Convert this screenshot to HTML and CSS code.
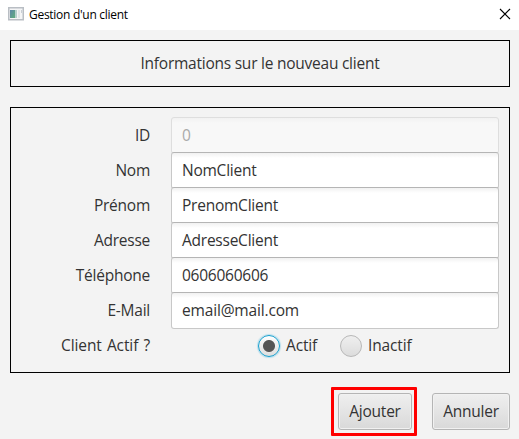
FILE: index.html
```html
<!DOCTYPE html>
<html lang="fr">
<head>
<meta charset="utf-8">
<title>Gestion d'un client</title>
<link rel="stylesheet" href="styles.css">
</head>
<body>
<header class="titlebar">
  <svg class="app-icon" width="16" height="14" viewBox="0 0 16 14">
    <defs><linearGradient id="pane" x1="0" y1="0" x2="1" y2="1"><stop offset="0" stop-color="#5b86a8"/><stop offset="1" stop-color="#5fae7c"/></linearGradient></defs>
    <rect x=".75" y=".75" width="14.500" height="12" fill="#f4f5f6" stroke="#b9bec4" stroke-width="1.500"/>
    <rect x="2" y="3" width="5" height="8" fill="url(#pane)"/>
    <rect x="7" y="3" width="2" height="8" fill="#b5d0cc"/>
    <rect x="10" y="3" width="2" height="8" fill="#e1e5e8"/>
    <path d="M13.500 3v3" stroke="#c9ced4"/>
  </svg>
  <h1 class="title">Gestion d'un client</h1>
  <svg class="close" width="12" height="12" viewBox="0 0 12 12"><path d="M1 1l10 10M11 1L1 11" stroke="#000" stroke-width="1.100"/></svg>
</header>
<main class="content">
  <section class="banner">Informations sur le nouveau client</section>
  <form class="form">
    <span class="label">ID</span><div class="field disabled">0</div>
    <span class="label">Nom</span><div class="field">NomClient</div>
    <span class="label">Prénom</span><div class="field">PrenomClient</div>
    <span class="label">Adresse</span><div class="field">AdresseClient</div>
    <span class="label">Téléphone</span><div class="field">0606060606</div>
    <span class="label">E-Mail</span><div class="field email">email@mail.com</div>
    <span class="label question">Client Actif ?</span>
    <div class="radios">
      <span class="radio checked"></span><span class="option first">Actif</span>
      <span class="radio"></span><span class="option">Inactif</span>
    </div>
  </form>
  <footer class="actions">
    <div class="highlight"><button class="button add" type="button">Ajouter</button></div>
    <button class="button cancel" type="button">Annuler</button>
  </footer>
</main>
</body>
</html>
```
FILE: styles.css
```css
* { box-sizing: border-box; }
body {
  margin: 0;
  width: 519px;
  height: 439px;
  overflow: hidden;
  background: #f3f3f3;
  color: #333;
  font: 15.5px/20px "Open Sans", "Noto Sans", sans-serif;
  letter-spacing: -.24px;
}
.titlebar {
  display: flex;
  align-items: center;
  height: 30px;
  padding: 0 8px;
  background: #fff;
}
.app-icon { margin-top: -2px; }
.title {
  flex: 1;
  margin: 0 0 0 5px;
  color: #000;
  font-size: 12px;
  font-weight: 400;
  letter-spacing: -.28px;
}
.close { margin: -2px 0 0; }
.content { padding: 10px 9px 0 10px; }
.banner {
  display: flex;
  align-items: center;
  justify-content: center;
  height: 47px;
  padding-bottom: 2px;
  border: 1px solid #000;
}
.form {
  display: grid;
  grid-template-columns: 140px 328px;
  grid-auto-rows: 35px;
  column-gap: 20px;
  height: 266px;
  margin-top: 20px;
  padding-top: 9px;
  border: 1px solid #000;
}
.label { padding-right: 1px; text-align: right; line-height: 37px; }
.question { word-spacing: 1.2px; letter-spacing: -.1px; }
.field {
  height: 37px;
  padding-left: 10px;
  line-height: 35px;
  border: 1px solid #c8c8c8;
  border-top-color: #b5b5b5;
  border-radius: 3px;
  background: linear-gradient(#f1f1f1, #fff 5px);
}
.email { letter-spacing: -.17px; }
.disabled {
  color: #aaa;
  border-color: #dedede;
  background: linear-gradient(#f2f2f2, #f8f8f8 5px);
}
.radios { display: flex; align-items: center; height: 37px; padding-left: 87px; }
.radio {
  width: 22px;
  height: 22px;
  border: 1px solid #b8b8b8;
  border-radius: 50%;
  background: linear-gradient(#efefef, #dcdcdc);
}
.checked {
  border: 1.500px solid #159fce;
  background: radial-gradient(circle, #555 5.500px, transparent 6.500px), linear-gradient(#fff, #ddd);
  box-shadow: 0 0 1px 1px #b9deec;
}
.option { margin-left: 6px; line-height: 37px; letter-spacing: -.15px; }
.first { width: 54px; }
.actions {
  display: flex;
  align-items: flex-start;
  justify-content: flex-end;
  gap: 15px;
  margin-top: 14px;
}
.highlight {
  width: 86px;
  height: 49px;
  padding: 3px 4px;
  border: 3px solid #f00;
  border-radius: 1px;
}
.button {
  display: block;
  height: 37px;
  padding: 0 0 2px;
  border: 1px solid #b5b5b5;
  border-radius: 3px;
  background: linear-gradient(#efefef, #d9d9d9);
  box-shadow: inset 0 0 0 1px #f1f1f1;
  color: #333;
  font: inherit;
  letter-spacing: inherit;
}
.add { width: 74px; }
.cancel { width: 78px; margin-top: 6px; }
```
